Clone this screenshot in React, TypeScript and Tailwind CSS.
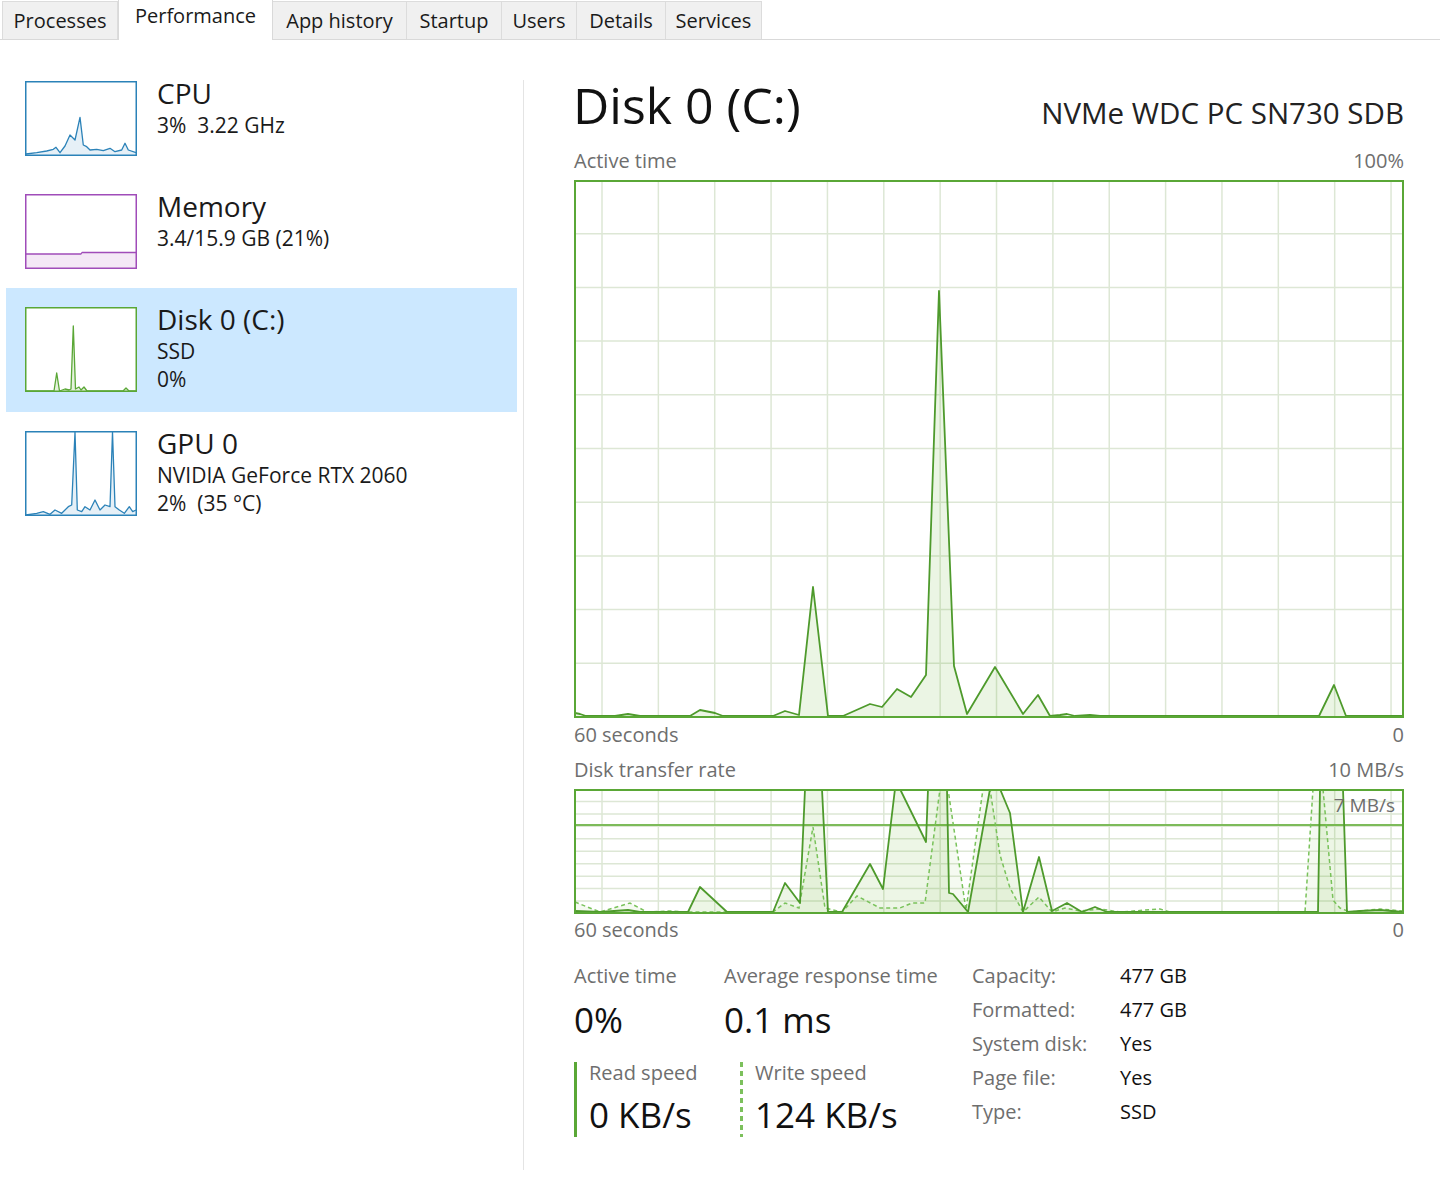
import React from "react";

type Pt = [number, number];

const linePath = (pts: Pt[], ox = 0, oy = 0) =>
  pts.map((p, i) => `${i ? "L" : "M"}${(p[0] - ox).toFixed(1)} ${(p[1] - oy).toFixed(1)}`).join(" ");

const areaPath = (pts: Pt[], ox: number, oy: number, base: number) => {
  const first = pts[0];
  const last = pts[pts.length - 1];
  return `${linePath(pts, ox, oy)} L${(last[0] - ox).toFixed(1)} ${base} L${(first[0] - ox).toFixed(1)} ${base} Z`;
};

// page coordinates read off the reference
const activePts: Pt[] = [
  [575, 713], [580, 714], [586, 716], [615, 716], [628, 714], [640, 716], [690, 716], [700, 710],
  [715, 713], [723, 716], [773, 716], [785, 711], [799, 715], [813, 587], [828, 716], [843, 716],
  [870, 704], [882, 707], [897, 689], [911, 697], [926, 675], [939, 291], [954, 666], [967, 714],
  [995, 667], [1023, 714], [1038, 695], [1050, 716], [1060, 715], [1067, 714], [1075, 716],
  [1090, 715], [1100, 716], [1319, 716], [1334, 685], [1346, 716], [1403, 716],
];

const readPts: Pt[] = [
  [575, 911], [600, 912], [628, 910], [640, 912], [688, 912], [700, 887], [727, 912], [773, 912],
  [785, 883], [800, 903], [805, 789], [822, 789], [828, 912], [842, 912], [870, 864], [883, 889],
  [895, 789], [900, 789], [926, 842], [928, 789], [947, 789], [949, 893], [953, 894], [968, 912],
  [990, 789], [1000, 789], [1010, 813], [1023, 912], [1039, 857], [1052, 911], [1067, 903],
  [1082, 912], [1095, 907], [1107, 912], [1318, 912], [1320, 789], [1343, 789], [1347, 912],
  [1360, 911], [1380, 910], [1403, 912],
];

const writePts: Pt[] = [
  [575, 902], [600, 912], [630, 903], [647, 912], [670, 911], [688, 912], [773, 912], [785, 903],
  [799, 908], [813, 827], [825, 908], [842, 912], [857, 896], [880, 908], [900, 908], [912, 903],
  [925, 903], [940, 789], [948, 789], [966, 910], [983, 789], [990, 789], [1000, 855], [1010, 888],
  [1023, 912], [1039, 897], [1052, 912], [1065, 908], [1080, 911], [1100, 909], [1120, 912],
  [1160, 909], [1170, 912], [1305, 912], [1313, 789], [1323, 789], [1333, 900], [1340, 908],
  [1350, 912], [1380, 909], [1403, 911],
];

const cpuPts: Pt[] = [
  [1, 73], [11.7, 71.7], [21.7, 70], [28.3, 68.3], [31, 66.3], [35, 71.7], [40, 65], [45, 54],
  [50, 59], [55, 36.3], [58.3, 64], [61.7, 65.7], [65, 69], [71.7, 68.3], [78.3, 69.7], [85, 67.3],
  [90, 70.7], [96.7, 69], [100, 62.3], [103.3, 69], [111, 71.7],
];

const memPts: Pt[] = [[1, 60], [56, 60], [57, 58.5], [111, 58.5]];

const diskPts: Pt[] = [
  [1, 84], [29, 84], [31.7, 66], [34.5, 84], [40, 82], [44, 83], [46, 82], [48.3, 19], [50.5, 82],
  [54, 80], [56, 83], [59, 80], [62, 84], [98, 84], [101, 81], [104, 84], [111, 84],
];

const gpuPts: Pt[] = [
  [1, 84], [11.7, 82.3], [18.3, 80.7], [25, 83.3], [30, 79], [36.7, 82.3], [43.3, 75.7], [46.7, 74],
  [50, 1], [52.3, 79], [56.7, 80.7], [60, 75.7], [65, 79], [70, 69], [75, 79], [80, 74], [85, 75.7],
  [87.5, 1], [90, 75.7], [94.3, 79], [99.3, 82.3], [104.3, 75.7], [107.7, 80.7], [111, 79],
];

const GRID = "#dde7d5";
const GREEN = "#5aa736";
const LINE = "#4e9a2c";

function Thumb({ h, color, fill, pts }: { h: number; color: string; fill: string; pts: Pt[] }) {
  const w = 112;
  return (
    <svg width={w} height={h} className="block shrink-0">
      <rect x={0} y={0} width={w} height={h} fill="#fff" />
      <path d={areaPath(pts, 0, 0, h - 1)} fill={fill} />
      <path d={linePath(pts)} fill="none" stroke={color} strokeWidth={1.3} strokeLinejoin="round" />
      <rect x={0.75} y={0.75} width={w - 1.5} height={h - 1.5} fill="none" stroke={color} strokeWidth={1.5} />
    </svg>
  );
}

function ActiveChart() {
  const w = 830;
  const h = 538;
  const vx = Array.from({ length: 15 }, (_, k) => 28 + k * 56.36);
  const hy = Array.from({ length: 9 }, (_, k) => (k + 1) * 53.7);
  return (
    <svg width={w} height={h} className="block">
      <rect width={w} height={h} fill="#fff" />
      {vx.map((x) => (
        <line key={x} x1={x} x2={x} y1={0} y2={h} stroke={GRID} strokeWidth={1.5} />
      ))}
      {hy.map((y) => (
        <line key={y} x1={0} x2={w} y1={y} y2={y} stroke={GRID} strokeWidth={1.5} />
      ))}
      <path d={areaPath(activePts, 574, 180, 537)} fill="#4da60c" fillOpacity={0.11} />
      <path d={linePath(activePts, 574, 180)} fill="none" stroke={LINE} strokeWidth={1.8} strokeLinejoin="round" />
      <rect x={1} y={1} width={w - 2} height={h - 2} fill="none" stroke={GREEN} strokeWidth={2} />
    </svg>
  );
}

function TransferChart() {
  const w = 830;
  const h = 125;
  const vx = Array.from({ length: 15 }, (_, k) => 28 + k * 56.36);
  const hy = Array.from({ length: 9 }, (_, k) => (k + 1) * 12.45);
  return (
    <svg width={w} height={h} className="block">
      <rect width={w} height={h} fill="#fff" />
      {vx.map((x) => (
        <line key={x} x1={x} x2={x} y1={0} y2={h} stroke={GRID} strokeWidth={1.5} />
      ))}
      {hy.map((y) => (
        <line key={y} x1={0} x2={w} y1={y} y2={y} stroke={GRID} strokeWidth={1.5} />
      ))}
      <line x1={0} x2={w} y1={36} y2={36} stroke="#7dbb5a" strokeWidth={2} />
      <path d={areaPath(readPts, 574, 789, 124)} fill="#4da60c" fillOpacity={0.1} />
      <path d={areaPath(writePts, 574, 789, 124)} fill="#4da60c" fillOpacity={0.06} />
      <path d={linePath(writePts, 574, 789)} fill="none" stroke="#79c25a" strokeWidth={1.5} strokeDasharray="4 3" />
      <path d={linePath(readPts, 574, 789)} fill="none" stroke={LINE} strokeWidth={1.8} strokeLinejoin="round" />
      <rect x={1} y={1} width={w - 2} height={h - 2} fill="none" stroke={GREEN} strokeWidth={2} />
    </svg>
  );
}

const tabs = [
  { label: "Processes", w: "w-[116px]" },
  { label: "Performance", w: "w-[155px]", active: true },
  { label: "App history", w: "w-[134px]" },
  { label: "Startup", w: "w-[95px]" },
  { label: "Users", w: "w-[75px]" },
  { label: "Details", w: "w-[89px]" },
  { label: "Services", w: "w-[96px]" },
];

function SideItem({
  title,
  lines,
  thumb,
  selected,
}: {
  title: string;
  lines: string[];
  thumb: React.ReactNode;
  selected?: boolean;
}) {
  return (
    <div className={`mx-[6px] flex gap-[20px] py-[19px] pl-[19px] ${selected ? "bg-[#cce8ff]" : ""}`}>
      {thumb}
      <div className="-mt-[3px] flex flex-col text-[#1a1a1a]">
        <div className="text-[28px] leading-[30px]">{title}</div>
        <div className="mt-[3px] text-[21px] leading-[28px]">
          {lines.map((l) => (
            <div key={l} className="whitespace-pre">
              {l}
            </div>
          ))}
        </div>
      </div>
    </div>
  );
}

export default function App() {
  return (
    <div className="h-[1184px] w-full overflow-hidden bg-white font-['Open_Sans','Noto_Sans',sans-serif] text-[#1a1a1a]">
      {/* tab strip */}
      <div className="flex h-[40px] items-end border-b border-[#d9d9d9] pl-[2px]">
        {tabs.map((t) =>
          t.active ? (
            <div
              key={t.label}
              className={`${t.w} -mb-px flex h-[41px] items-start justify-center border-x border-t border-[#d9d9d9] bg-white pt-[3px] text-[20px] leading-[26px]`}
            >
              {t.label}
            </div>
          ) : (
            <div
              key={t.label}
              className={`${t.w} flex h-[38px] items-center justify-center border-r border-t border-[#dcdcdc] bg-[#f0f0f0] text-[20px] leading-[26px] first:border-l`}
            >
              {t.label}
            </div>
          ),
        )}
      </div>

      <div className="flex h-[1144px]">
        {/* left list */}
        <div className="w-[523px] shrink-0 pt-[22px]">
          <SideItem
            title="CPU"
            lines={["3%  3.22 GHz"]}
            thumb={<Thumb h={75} color="#2b82b8" fill="#e6f0f7" pts={cpuPts} />}
          />
          <SideItem
            title="Memory"
            lines={["3.4/15.9 GB (21%)"]}
            thumb={<Thumb h={75} color="#a04cb9" fill="#f4e8f6" pts={memPts} />}
          />
          <SideItem
            title="Disk 0 (C:)"
            lines={["SSD", "0%"]}
            selected
            thumb={<Thumb h={85} color="#5aa736" fill="#e6f2de" pts={diskPts} />}
          />
          <SideItem
            title="GPU 0"
            lines={["NVIDIA GeForce RTX 2060", "2%  (35 °C)"]}
            thumb={<Thumb h={85} color="#2b82b8" fill="#e6f0f7" pts={gpuPts} />}
          />
        </div>

        <div className="mb-[14px] mt-[40px] w-px shrink-0 bg-[#e4e4e4]" />

        {/* detail panel */}
        <div className="flex w-[880px] flex-col pl-[49px] pt-[40px]">
          <div className="flex w-[831px] items-baseline justify-between">
            <div className="text-[50px] leading-[50px] text-[#111]">Disk 0 (C:)</div>
            <div className="text-[29.5px] leading-[34px] text-[#222]">NVMe WDC PC SN730 SDB</div>
          </div>

          <div className="mt-[19px] flex w-[831px] justify-between pl-px text-[20px] leading-[24px] text-[#6e6e6e]">
            <span>Active time</span>
            <span>100%</span>
          </div>
          <div className="mt-[7px] pl-px">
            <ActiveChart />
          </div>
          <div className="mt-[5px] flex w-[831px] justify-between pl-px text-[20px] leading-[24px] text-[#6e6e6e]">
            <span>60 seconds</span>
            <span>0</span>
          </div>

          <div className="mt-[11px] flex w-[831px] justify-between pl-px text-[20px] leading-[24px] text-[#6e6e6e]">
            <span>Disk transfer rate</span>
            <span>10 MB/s</span>
          </div>
          <div className="relative mt-[7px] w-[831px] pl-px">
            <TransferChart />
            <span className="absolute right-[9px] top-[4px] text-[19px] leading-[24px] text-[#6e6e6e]">7 MB/s</span>
          </div>
          <div className="mt-[4px] flex w-[831px] justify-between pl-px text-[20px] leading-[24px] text-[#6e6e6e]">
            <span>60 seconds</span>
            <span>0</span>
          </div>

          {/* stats */}
          <div className="mt-[17px] flex pl-px">
            <div className="grid w-[398px] grid-cols-[150px_1fr]">
              <div className="text-[20px] leading-[34px] text-[#6e6e6e]">Active time</div>
              <div className="text-[20px] leading-[34px] text-[#6e6e6e]">Average response time</div>
              <div className="mt-[5px] text-[35px] leading-[44px] text-[#111]">0%</div>
              <div className="mt-[5px] text-[35px] leading-[44px] text-[#111]">0.1 ms</div>

              <div className="mt-[20px] flex">
                <div className="w-[3px] bg-[#5aa736]" />
                <div className="pl-[12px]">
                  <div className="text-[20px] leading-[22px] text-[#6e6e6e]">Read speed</div>
                  <div className="mt-[9px] text-[35px] leading-[44px] text-[#111]">0 KB/s</div>
                </div>
              </div>
              <div className="ml-[16px] mt-[20px] flex">
                <div className="w-[3px] bg-[repeating-linear-gradient(to_bottom,#7cc05c_0_5px,transparent_5px_9px)]" />
                <div className="pl-[12px]">
                  <div className="text-[20px] leading-[22px] text-[#6e6e6e]">Write speed</div>
                  <div className="mt-[9px] text-[35px] leading-[44px] text-[#111]">124 KB/s</div>
                </div>
              </div>
            </div>

            <div className="grid h-[170px] auto-rows-[34px] grid-cols-[148px_auto] text-[20px] leading-[34px]">
              <span className="text-[#6e6e6e]">Capacity:</span>
              <span className="text-[#111]">477 GB</span>
              <span className="text-[#6e6e6e]">Formatted:</span>
              <span className="text-[#111]">477 GB</span>
              <span className="text-[#6e6e6e]">System disk:</span>
              <span className="text-[#111]">Yes</span>
              <span className="text-[#6e6e6e]">Page file:</span>
              <span className="text-[#111]">Yes</span>
              <span className="text-[#6e6e6e]">Type:</span>
              <span className="text-[#111]">SSD</span>
            </div>
          </div>
        </div>
      </div>
    </div>
  );
}
